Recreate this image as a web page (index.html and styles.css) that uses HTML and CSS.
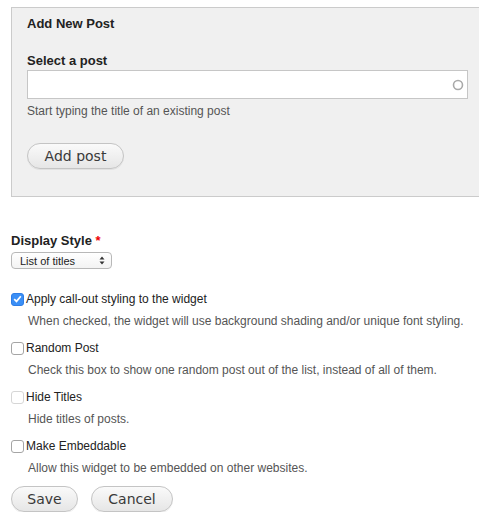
FILE: index.html
```html
<!DOCTYPE html>
<html>
<head>
<meta charset="utf-8">
<link rel="stylesheet" href="styles.css">
</head>
<body>
<div class="page">
  <div class="panel">
    <h3 class="panel-title">Add New Post</h3>
    <label class="field-label">Select a post</label>
    <div class="input">
      <svg class="throbber" width="12" height="12" viewBox="0 0 12 12"><circle cx="6" cy="6" r="4.5" fill="none" stroke="#a9a9a9" stroke-width="1.6"/></svg>
    </div>
    <div class="help">Start typing the title of an existing post</div>
    <button class="btn btn-add">Add post</button>
  </div>

  <div class="form">
    <div class="field-label style-label">Display Style <span class="req">*</span></div>
    <div class="select">
      <span>List of titles</span>
      <svg width="6" height="9" viewBox="0 0 6 9"><path d="M0.5 3.5 L3 0.5 L5.5 3.5 Z M0.5 5.5 L3 8.5 L5.5 5.5 Z" fill="#333"/></svg>
    </div>

    <div class="check-item first">
      <div class="check-row">
        <span class="cb checked"><svg width="9" height="8" viewBox="0 0 9 8"><path d="M1.2 4.2 L3.5 6.4 L7.8 1.2" fill="none" stroke="#fff" stroke-width="1.7"/></svg></span>
        <span class="check-label">Apply call-out styling to the widget</span>
      </div>
      <div class="desc">When checked, the widget will use background shading and/or unique font styling.</div>
    </div>

    <div class="check-item">
      <div class="check-row">
        <span class="cb"></span>
        <span class="check-label">Random Post</span>
      </div>
      <div class="desc">Check this box to show one random post out of the list, instead of all of them.</div>
    </div>

    <div class="check-item">
      <div class="check-row">
        <span class="cb disabled"></span>
        <span class="check-label">Hide Titles</span>
      </div>
      <div class="desc">Hide titles of posts.</div>
    </div>

    <div class="check-item">
      <div class="check-row">
        <span class="cb"></span>
        <span class="check-label">Make Embeddable</span>
      </div>
      <div class="desc">Allow this widget to be embedded on other websites.</div>
    </div>

    <div class="actions">
      <button class="btn btn-save">Save</button>
      <button class="btn btn-cancel">Cancel</button>
    </div>
  </div>
</div>
</body>
</html>
```

FILE: styles.css
```css
* { box-sizing: border-box; }
html, body { margin: 0; padding: 0; background: #fff; }
body {
  font-family: "Liberation Sans", Arial, sans-serif;
  font-size: 13px;
  color: #333;
  overflow: hidden;
}
.page { padding: 7px 0 0 11px; }
.panel {
  background: #f0f0f0;
  border: 1px solid #cbcbcb;
  border-right: none;
  height: 190px;
  padding: 8px 0 0 15px;
}
.panel-title {
  margin: 0;
  font-size: 13px;
  font-weight: bold;
  color: #222;
  line-height: 15px;
}
.field-label {
  display: block;
  font-weight: bold;
  font-size: 13px;
  color: #222;
  line-height: 15px;
}
.panel .field-label { margin-top: 22px; }
.input {
  margin-top: 2px;
  width: 441px;
  height: 29px;
  background: #fff;
  border: 1px solid #c6c6c6;
  display: flex;
  align-items: center;
  justify-content: flex-end;
  padding-right: 3px;
}
.help {
  margin-top: 5px;
  font-size: 12px;
  color: #555;
  line-height: 14px;
}
.btn {
  font-family: "DejaVu Sans", Verdana, sans-serif;
  font-size: 14px;
  color: #3a3a3a;
  height: 26px;
  border: 1px solid #c4c4c4;
  border-radius: 13px;
  background: linear-gradient(#fafafa, #e6e6e6);
  padding: 0 15px;
  box-shadow: 0 1px 0 rgba(0,0,0,0.06);
  line-height: 24px;
  cursor: pointer;
}
.btn-add { margin-top: 25px; width: 97px; padding: 0; }
.form { padding-top: 36px; }
.style-label { line-height: 15px; }
.req { color: #e00; }
.select {
  margin-top: 4px;
  width: 101px;
  height: 17px;
  border: 1px solid #b8b8b8;
  border-radius: 4px;
  background: linear-gradient(#fff, #f3f3f3);
  display: flex;
  align-items: center;
  justify-content: space-between;
  padding: 0 6px 0 8px;
  font-size: 11px;
  color: #222;
}
.check-item { margin-top: 13px; }
.check-item.first { margin-top: 23px; }
.check-row { display: flex; align-items: center; height: 14px; }
.cb {
  width: 13px;
  height: 13px;
  border: 1px solid #a5a5a5;
  border-radius: 3px;
  background: #fff;
  margin-right: 2px;
  display: flex;
  align-items: center;
  justify-content: center;
}
.cb.checked { background: #3b8ff6; border-color: #2e7de6; }
.cb.disabled { border-color: #d6d6d6; }
.check-label { font-size: 12px; color: #222; line-height: 14px; }
.desc {
  margin-top: 8px;
  padding-left: 17px;
  font-size: 12px;
  color: #555;
  line-height: 14px;
}
.actions { margin-top: 11px; display: flex; gap: 13px; }
.btn-save { width: 67px; padding: 0; }
.btn-cancel { width: 82px; padding: 0; }
```
